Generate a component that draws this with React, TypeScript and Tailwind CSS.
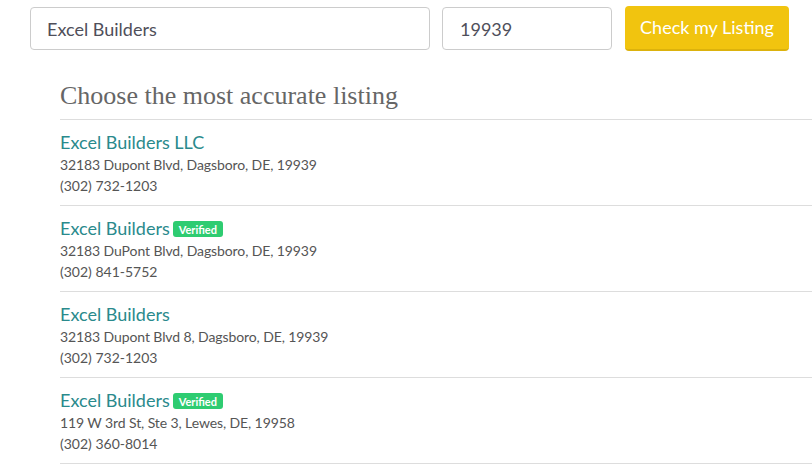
import React from "react";

const listings = [
  { name: "Excel Builders LLC", verified: false, address: "32183 Dupont Blvd, Dagsboro, DE, 19939", phone: "(302) 732-1203" },
  { name: "Excel Builders", verified: true, address: "32183 DuPont Blvd, Dagsboro, DE, 19939", phone: "(302) 841-5752" },
  { name: "Excel Builders", verified: false, address: "32183 Dupont Blvd 8, Dagsboro, DE, 19939", phone: "(302) 732-1203" },
  { name: "Excel Builders", verified: true, address: "119 W 3rd St, Ste 3, Lewes, DE, 19958", phone: "(302) 360-8014" },
];

export default function App() {
  return (
    <div className="w-[812px] h-[464px] overflow-hidden bg-white font-['Lato',sans-serif] text-[#555]">
      <div className="flex items-center pl-[30px] pt-[6px]">
        <input
          readOnly
          value="Excel Builders"
          className="w-[400px] h-[43px] rounded-[4px] border border-[#ccc] pl-[16px] text-[18px] text-[#4f4f5a] outline-none font-['Lato',sans-serif]"
        />
        <input
          readOnly
          value="19939"
          className="ml-[12px] w-[170px] h-[43px] rounded-[4px] border border-[#ccc] pl-[17px] text-[18px] text-[#4f4f5a] outline-none font-['Lato',sans-serif]"
        />
        <button className="ml-[13px] w-[164px] h-[45px] rounded-[4px] bg-[#f1c40f] border-b-2 border-[#dcb20c] text-white text-[18px] font-['Lato',sans-serif]">
          Check my Listing
        </button>
      </div>
      <div className="pl-[60px] mt-[27px]">
        <h2 className="text-[26px] leading-[36px] font-light text-[#666] font-['Roboto_Slab','Liberation_Serif',serif] mb-[5px]">
          Choose the most accurate listing
        </h2>
        {listings.map((l, i) => (
          <div key={i} className="border-t border-[#ddd] pt-[10px] pb-[9px] last:border-b">
            <div className="flex items-center text-[18px] leading-[24px] text-[#2a8a8c]">
              <span>{l.name}</span>
              {l.verified && (
                <span className="ml-[3px] mt-[2px] inline-flex items-center h-[16px] px-[6px] rounded-[3px] bg-[#2ecc71] text-white text-[11px] font-bold leading-none">
                  Verified
                </span>
              )}
            </div>
            <div className="text-[14px] leading-[21px] text-[#555] tracking-[-0.1px]">{l.address}</div>
            <div className="text-[14px] leading-[21px] text-[#555]">{l.phone}</div>
          </div>
        ))}
      </div>
    </div>
  );
}
